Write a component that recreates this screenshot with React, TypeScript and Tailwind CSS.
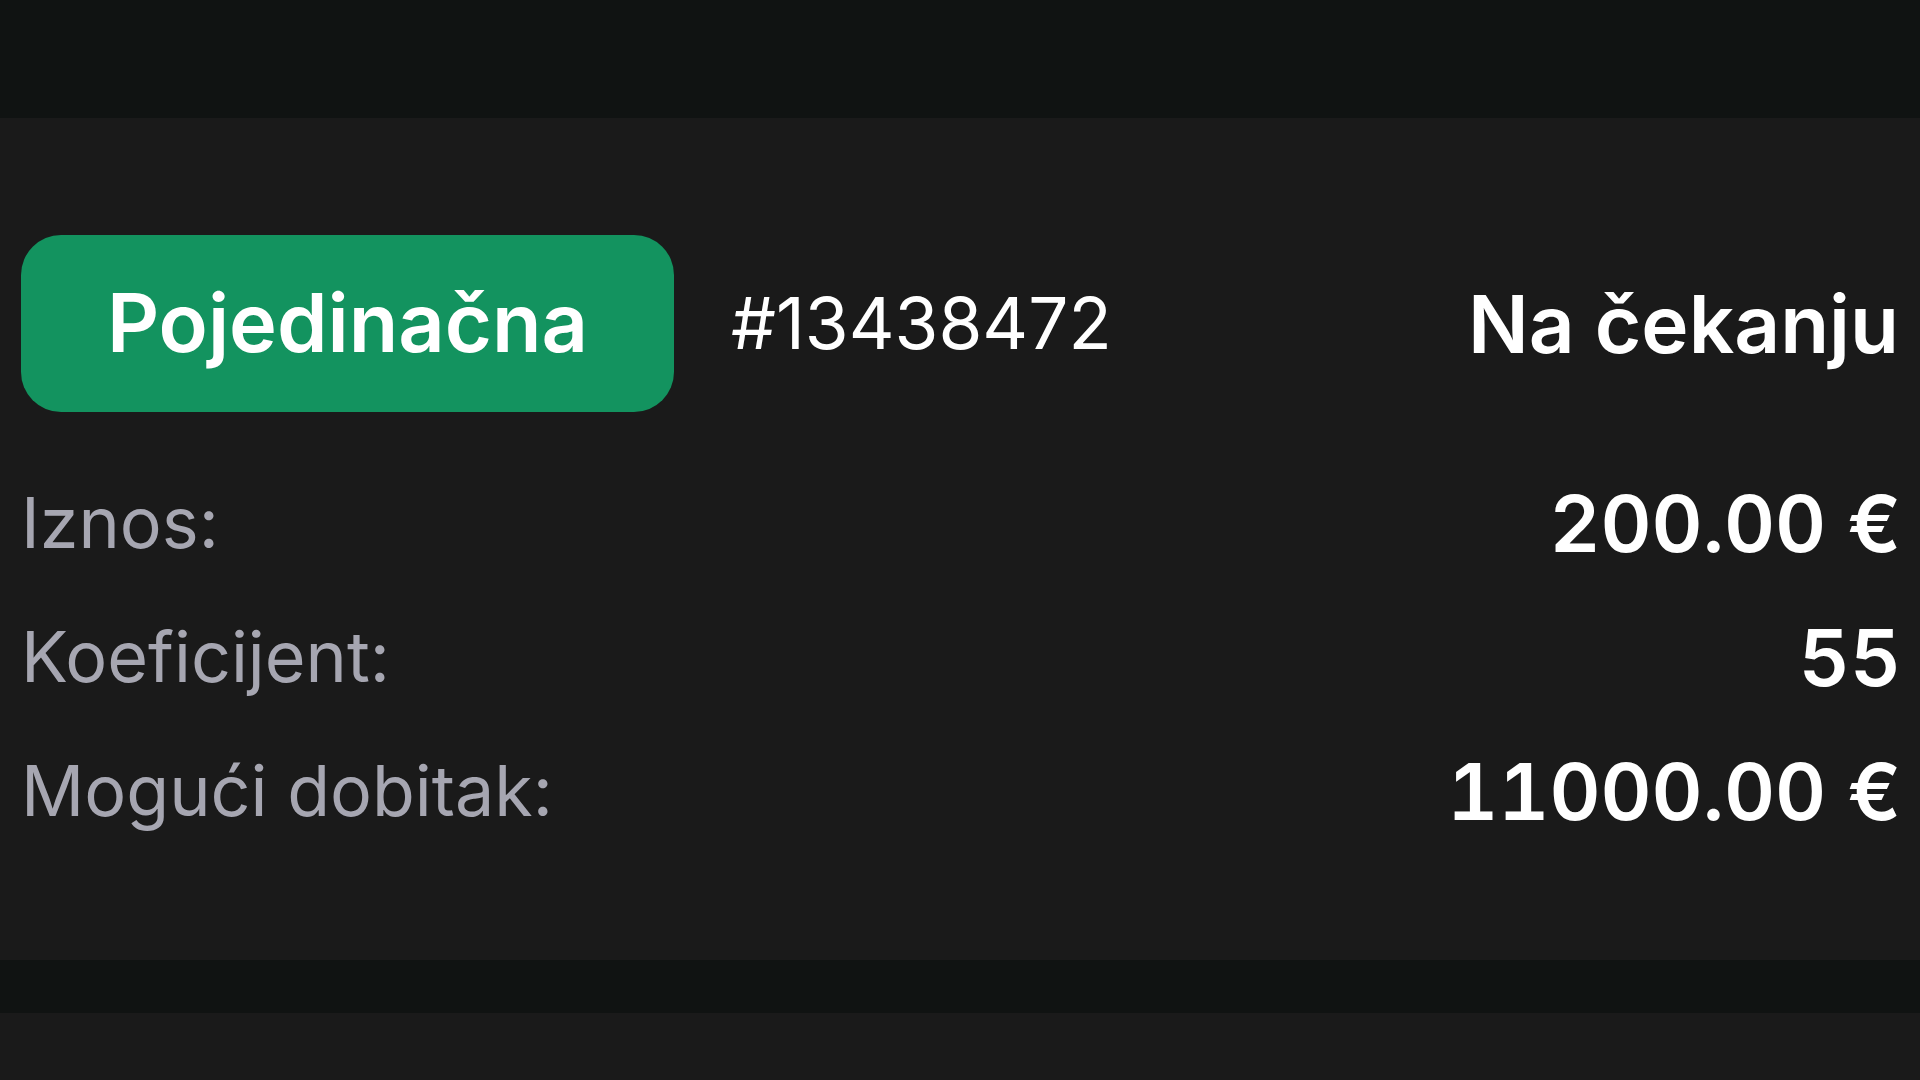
export default function App() {
  const rows = [
    { label: "Iznos:", value: "200.00 €" },
    { label: "Koeficijent:", value: "55" },
    { label: "Mogući dobitak:", value: "11000.00 €" },
  ];
  return (
    <div className="w-[1920px] h-[1080px] flex flex-col bg-[#1a1a1a] overflow-hidden" style={{ fontFamily: "Inter, 'Noto Sans', sans-serif" }}>
      <div className="h-[118px] bg-[#101312] shrink-0" />
      <div className="h-[842px] shrink-0 bg-[#1a1a1a] pl-[21px] pr-[21px] pt-[117px]">
        <div className="flex items-center h-[177px]">
          <div className="w-[653px] h-[177px] rounded-[40px] bg-[#13935f] flex items-center justify-center">
            <span className="text-white font-semibold text-[81px] leading-none">Pojedinačna</span>
          </div>
          <span className="ml-[57px] text-white text-[71px] leading-none font-normal">#13438472</span>
          <span className="ml-auto text-white text-[80px] leading-none font-semibold">Na čekanju</span>
        </div>
        <div className="mt-[44px] flex flex-col">
          {rows.map((r) => (
            <div key={r.label} className="h-[134px] flex items-center justify-between">
              <span className="text-[70px] leading-none text-[#a6a6b1]">{r.label}</span>
              <span className="text-[79px] leading-none text-white font-semibold tabular-nums mr-[-2px]">{r.value}</span>
            </div>
          ))}
        </div>
      </div>
      <div className="h-[53px] bg-[#101312] shrink-0" />
      <div className="flex-1 bg-[#1a1a1a]" />
    </div>
  );
}
